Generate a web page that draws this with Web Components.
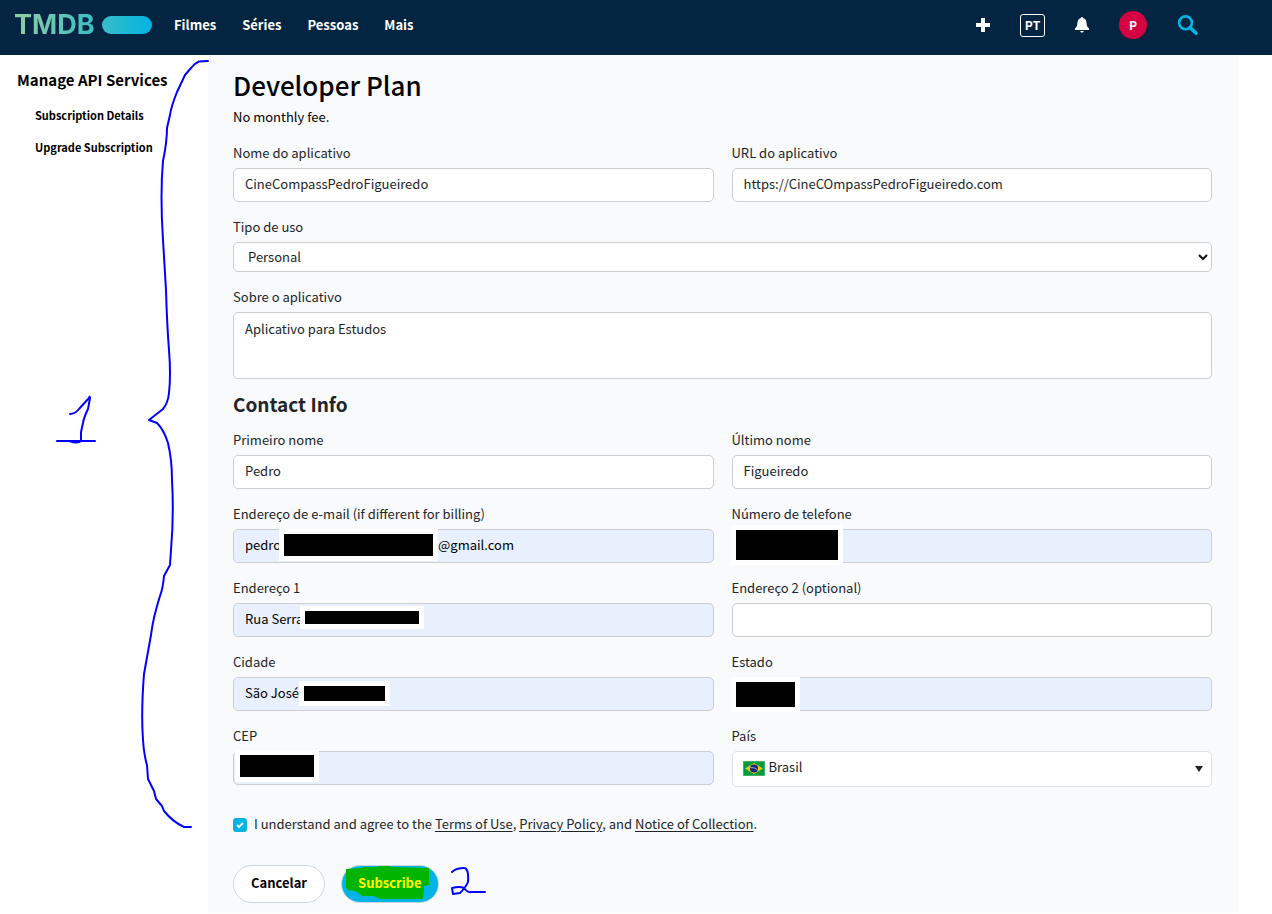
<!DOCTYPE html>
<html lang="pt">
<head>
<meta charset="utf-8">
<title>Developer Plan</title>
<style>
  body { margin: 0; background: #fff; color: #212529; font: 13px/20px "Noto Sans CJK SC", "Noto Sans", sans-serif; }
</style>
</head>
<body>
<plan-page>
  <site-header slot="header"></site-header>
  <side-menu slot="side"></side-menu>
  <plan-form></plan-form>
  <ink-notes slot="notes"></ink-notes>
</plan-page>

<script>
const define = (name, html, setup) => customElements.define(name, class extends HTMLElement {
  connectedCallback() {
    if (this.shadowRoot) return;
    const root = this.attachShadow({ mode: 'open' });
    const t = document.createElement('template');
    t.innerHTML = '<style>*{box-sizing:border-box}</style>' + (typeof html === 'function' ? html(this) : html);
    root.append(t.content.cloneNode(true));
    if (setup) setup(this, root);
  }
});

define('plan-page', `
  <style>
    :host { display: block; position: relative; }
    .cols { display: grid; grid-template-columns: 208px minmax(0, 1fr); padding-right: 34px; }
    main { background: #f8fafc; padding: 15px 26px 10px 25px; }
  </style>
  <slot name="header"></slot>
  <div class="cols"><slot name="side"></slot><main><slot></slot></main></div>
  <slot name="notes"></slot>`);

define('site-header', `
  <style>
    :host { display: block; background: #032541; color: #fff; }
    header { display: flex; align-items: center; justify-content: space-between; height: 55px; padding: 0 74px 5px 14px; }
    nav, .tools, .logo { display: flex; align-items: center; }
    nav { gap: 26px; }
    nav a { color: #fff; text-decoration: none; font-weight: 600; }
    .logo { width: 138px; margin-right: -4px; justify-content: space-between;
      font: 700 27px/28px Inter, sans-serif; }
    .logo span { background: linear-gradient(90deg, #90cea1, #3cbec9); background-clip: text; -webkit-background-clip: text; color: transparent; }
    .logo i { width: 50px; height: 18px; border-radius: 9px; background: linear-gradient(90deg, #38bdca, #01b4e4); }
    .tools { gap: 30px; }
    button { background: none; border: 0; padding: 0; color: #fff; font: inherit; font-weight: 600; display: grid; place-items: center; }
    .lang { width: 25px; height: 23px; border: 1px solid #fff; border-radius: 3px; font-size: 12px; line-height: 20px; }
    .me { width: 28px; height: 28px; border-radius: 50%; background: #d40242; font-size: 12px; line-height: 20px; }
  </style>
  <header>
    <nav>
      <a class="logo" href="#" aria-label="TMDB"><span>TMDB</span><i></i></a>
      <a href="#">Filmes</a><a href="#">Séries</a><a href="#">Pessoas</a><a href="#">Mais</a>
    </nav>
    <div class="tools">
      <button aria-label="Adicionar"><svg width="14" height="14"><path d="M5 0h4v5h5v4H9v5H5V9H0V5h5z" fill="#fff"/></svg></button>
      <button class="lang">PT</button>
      <button aria-label="Notificações"><svg width="14" height="16" viewBox="0 0 14 16"><path d="M7 0c.6 0 1 .4 1 1 2.400.5 3.500 2.500 3.600 5 .1 2.700.6 3.900 2.400 5.500V13H0v-1.500C1.800 9.900 2.300 8.700 2.400 6 2.500 3.500 3.600 1.500 6 1c0-.6.4-1 1-1zM5.300 14h3.400c-.2 1-.8 1.600-1.700 1.600S5.500 15 5.300 14z" fill="#fff"/></svg></button>
      <button class="me">P</button>
      <button aria-label="Pesquisar"><svg width="21" height="20" viewBox="0 0 21 20" fill="none" stroke="#01b4e4"><circle cx="8.500" cy="7.800" r="6.400" stroke-width="2.600"/><path d="M13 12.500l6 5.700" stroke-width="3.600" stroke-linecap="round"/></svg></button>
    </div>
  </header>`);

define('side-menu', `
  <style>
    :host { display: block; padding: 15px 0 0 17px; color: #000; }
    h2 { margin: 0 0 15px; font-size: 15px; line-height: 20px; font-weight: 600; white-space: nowrap; }
    ul { margin: 0; padding: 0 0 0 18px; list-style: none; display: grid; gap: 12px; }
    a { color: #000; text-decoration: none; font-size: 11px; font-weight: 600; white-space: nowrap; }
  </style>
  <h2>Manage API Services</h2>
  <ul><li><a href="#">Subscription Details</a></li><li><a href="#">Upgrade Subscription</a></li></ul>`);

define('form-field', el => {
  const a = n => el.getAttribute(n) || '', kind = a('kind') || 'text';
  const control = kind === 'area' ? `<textarea id="c">${a('value')}</textarea>`
    : kind === 'select' || kind === 'country' ? `<select id="c" class="${kind}"><option>${a('value')}</option></select>`
    : `<input id="c" type="text" value="${a('value')}" autocomplete="off">`;
  const extra = kind === 'select'
    ? `<svg class="arrow" width="10" height="7"><path d="M1 1l4 4 4-4" fill="none" stroke="#111" stroke-width="2"/></svg>`
    : kind === 'country'
    ? `<svg class="arrow tri" width="8" height="6"><path d="M0 0h8L4 6z" fill="#212529"/></svg>
       <svg class="flag" width="22" height="15"><rect width="22" height="15" fill="#009b3a" stroke="#7cc796"/><path d="M2 7.500L11 2l9 5.500-9 5.500z" fill="#e8c51a"/><circle cx="11" cy="7.500" r="4" fill="#1b2a78"/><path d="M7.300 6.600c2.700-.3 5.200.5 7.200 2.200" fill="none" stroke="#fff" stroke-width=".6"/></svg>`
    : '';
  return `
  <style>
    :host { display: block; min-width: 0; }
    label { display: block; height: 20px; margin-bottom: 5px; }
    .box { position: relative; display: flex; }
    input, select, textarea { width: 100%; margin: 0; border: 1px solid #ccced1; border-radius: 5px; background: #fff; color: #212529;
      font: inherit; line-height: 20px; padding: 0 11px; height: 34px; appearance: none; outline: 0; }
    input { padding-bottom: 4px; }
    select { height: 30px; padding: 0 14px 1px; }
    select.country { height: 36px; padding: 0 36px 4px; border-color: #dee2e6; }
    textarea { height: 67px; padding-top: 6px; resize: none; display: block; }
    :host([filled]) input { background: #e8f0fe; color: #000; }
    .arrow { position: absolute; right: 4px; top: 12px; pointer-events: none; }
    .tri { right: 9px; top: 15px; }
    .flag { position: absolute; left: 11px; top: 10px; pointer-events: none; }
  </style>
  <label for="c">${a('label')}</label>
  <div class="box">${control}${extra}<slot></slot></div>`;
});

define('redact-mark', el => {
  const [x, y, w, h] = el.getAttribute('box').split(' ');
  return `
  <style>
    :host { position: absolute; left: ${x}px; top: ${y}px; display: flex; color: #000; line-height: 32px; white-space: nowrap; }
    i { width: ${w}px; height: ${h}px; background: #000; border: 5px solid #fff; }
  </style><i></i><slot></slot>`;
});

define('agree-check', `
  <style>
    :host { display: flex; align-items: center; gap: 7px; }
    input { appearance: none; flex: none; width: 14px; height: 14px; margin: 2px 0 0; border-radius: 3px;
      background: #01b4e4 url("data:image/svg+xml,%3Csvg xmlns='http://www.w3.org/2000/svg' viewBox='0 0 14 14'%3E%3Cpath d='M4 7l2 2 4-4' fill='none' stroke='white' stroke-width='1.800'/%3E%3C/svg%3E"); }
    a { color: inherit; text-underline-offset: 2px; }
  </style>
  <input id="ok" type="checkbox" checked>
  <label for="ok">I understand and agree to the <a href="#">Terms of Use</a>, <a href="#">Privacy Policy</a>, and <a href="#">Notice of Collection</a>.</label>`);

define('pill-button', `
  <style>
    :host { display: block; }
    button { position: relative; display: block; height: 38px; padding: 0 17px 2px; border: 1px solid #cbd5e1; border-radius: 19px; background: #fff;
      color: #000; font: inherit; font-weight: 600; isolation: isolate; }
    svg { display: none; position: absolute; left: -1px; top: -1px; z-index: -1; }
    :host([marked]) button { background: #01b4e4; color: #ff0; padding: 0 16px 2px; }
    :host([marked]) svg { display: block; }
  </style>
  <button type="button"><slot></slot><svg width="97" height="38"><path d="M5 4L21 3l1-1h14l1-1h12l1 1 38 1v17l-5 1-1 13H39l-6-3H21l-2-2-5-3-7-1-2-2z" fill="#00b400"/></svg></button>`);

define('plan-form', `
  <style>
    :host { display: block; }
    h1, h2, p { margin: 0; }
    h1 { font-size: 26px; line-height: 30px; font-weight: 500; color: #000; }
    p { margin: 7px 0 16px; color: #000; }
    h2 { font-size: 19px; line-height: 30px; font-weight: 600; margin: 10px 0 11px; }
    .grid { display: grid; grid-template-columns: repeat(2, minmax(0, 1fr)); gap: 15px 18px; }
    .wide { grid-column: 1 / -1; }
    agree-check { margin-top: 27px; }
    .actions { display: flex; gap: 16px; margin-top: 31px; }
  </style>
  <h1>Developer Plan</h1>
  <p>No monthly fee.</p>
  <div class="grid">
    <form-field label="Nome do aplicativo" value="CineCompassPedroFigueiredo"></form-field>
    <form-field label="URL do aplicativo" value="https://CineCOmpassPedroFigueiredo.com"></form-field>
    <form-field class="wide" kind="select" label="Tipo de uso" value="Personal"></form-field>
    <form-field class="wide" kind="area" label="Sobre o aplicativo" value="Aplicativo para Estudos"></form-field>
  </div>
  <h2>Contact Info</h2>
  <div class="grid">
    <form-field label="Primeiro nome" value="Pedro"></form-field>
    <form-field label="Último nome" value="Figueiredo"></form-field>
    <form-field filled label="Endereço de e-mail (if different for billing)" value="pedro"><redact-mark box="46 0 159 32">@gmail.com</redact-mark></form-field>
    <form-field filled label="Número de telefone"><redact-mark box="-1 -4 112 40"></redact-mark></form-field>
    <form-field filled label="Endereço 1" value="Rua Serra"><redact-mark box="67 3 124 23"></redact-mark></form-field>
    <form-field label="Endereço 2 (optional)"></form-field>
    <form-field filled label="Cidade" value="São José"><redact-mark box="66 4 91 25"></redact-mark></form-field>
    <form-field filled label="Estado"><redact-mark box="-1 0 69 35"></redact-mark></form-field>
    <form-field filled label="CEP"><redact-mark box="2 -1 84 32"></redact-mark></form-field>
    <form-field kind="country" label="País" value="Brasil"></form-field>
  </div>
  <agree-check></agree-check>
  <div class="actions">
    <pill-button>Cancelar</pill-button>
    <pill-button marked>Subscribe</pill-button>
  </div>`);

define('ink-notes', `
  <style>
    :host { position: absolute; left: 0; top: 0; pointer-events: none; }
    svg { display: block; }
  </style>
  <svg width="500" height="900" fill="none" stroke="#00f" stroke-width="2" stroke-linejoin="round" stroke-linecap="round" aria-hidden="true">
    <path d="M208 61L199 61.500Q195 63 191 68L185 75 177 92Q171 107 170 115L167 128Q167 142 163 161 160 195 163 240L166 290Q167 325 169 350 171 375 169 393 168 403 163 409L149 420 157 423Q164 430 168 443 172 460 172 480 174 515 171 550L170 565 164 576Q163 588 160 596 153 618 151 635L144 674Q141 712 143 740 144 755 147 765L148 779 154 791 156 799 162 806 164 811Q173 822 184 827L191 827"/>
    <path d="M70 414Q75 414 79 409L89 398Q90 395 90 398L88 409Q84 417 83 423L81 432 81 441Q78 444 69 441M57 441H95"/>
    <path d="M452 872Q456 868 464 868 469 868 468 882 466 887 460 893L453 894 452 888Q460 886 464 888 468 893 471 892L485 892"/>
  </svg>`);
</script>
</body>
</html>
